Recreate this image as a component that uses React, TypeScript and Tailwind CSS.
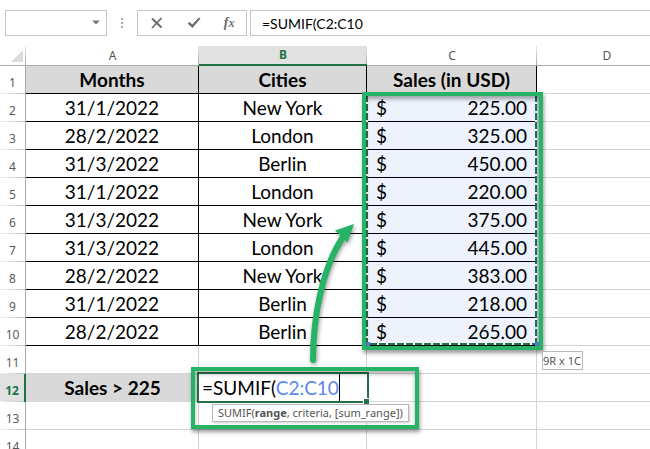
import { clsx } from "clsx";

type Row = { n: number; date?: string; city?: string; sales?: string };

const data: Row[] = [
  { n: 2, date: "31/1/2022", city: "New York", sales: "225.00" },
  { n: 3, date: "28/2/2022", city: "London", sales: "325.00" },
  { n: 4, date: "31/3/2022", city: "Berlin", sales: "450.00" },
  { n: 5, date: "31/1/2022", city: "London", sales: "220.00" },
  { n: 6, date: "31/3/2022", city: "New York", sales: "375.00" },
  { n: 7, date: "31/3/2022", city: "London", sales: "445.00" },
  { n: 8, date: "28/2/2022", city: "New York", sales: "383.00" },
  { n: 9, date: "31/1/2022", city: "Berlin", sales: "218.00" },
  { n: 10, date: "28/2/2022", city: "Berlin", sales: "265.00" },
];

const ui = "font-['Noto_Sans','Open_Sans',sans-serif]";
const filled = "border-b border-r border-black p-0 text-center";
const blank = "border-b border-r border-[#d4d4d4] p-0";

function FormulaBar() {
  return (
    <div className="flex h-[46px] items-start pl-[5px] pt-[10px]">
      <div className="relative h-[26px] w-[102px] shrink-0 border border-[#c6c6c6]">
        <select aria-label="Name box" className="h-full w-full appearance-none bg-transparent px-2 text-xs outline-none">
          <option></option>
        </select>
        <svg className="pointer-events-none absolute right-[6px] top-[9px]" width="8" height="5" viewBox="0 0 8 5">
          <path d="M0 0.5h8L4 4.5z" fill="#777" />
        </svg>
      </div>
      <svg className="mx-[13px] mt-[7px] shrink-0" width="4" height="12" viewBox="0 0 4 12" fill="#a6a6a6">
        <path d="M1 1h2v2H1zM1 5h2v2H1zM1 9h2v2H1z" />
      </svg>
      <div className="flex h-[26px] w-[110px] shrink-0 items-center justify-around border border-[#c6c6c6] text-[#6e6e6e]">
        <button aria-label="Cancel">
          <svg width="14" height="14" viewBox="0 0 14 14" fill="none" stroke="currentColor">
            <path d="M2 2.5 11.500 11.500" strokeWidth="2.200" />
            <path d="M11.500 2 2 12" strokeWidth="1.800" />
          </svg>
        </button>
        <button aria-label="Enter">
          <svg width="14" height="14" viewBox="0 0 14 14" fill="currentColor">
            <path d="M0.500 7.500 2.800 6l2.400 2.500L11.800 1.500l1.700 1L5.500 12z" />
          </svg>
        </button>
        <button aria-label="Insert function" className="flex items-baseline font-['Liberation_Serif',serif] text-sm font-bold italic leading-4">
          f<span className="text-xs">x</span>
        </button>
      </div>
      <input
        aria-label="Formula bar"
        defaultValue="=SUMIF(C2:C10"
        className="ml-[3px] h-[26px] min-w-0 flex-1 border border-r-0 border-[#c6c6c6] pl-[11px] font-[Lato,sans-serif] text-[14px] text-black outline-none"
      />
    </div>
  );
}

function ColumnHead({ label, active, last }: { label: string; active?: boolean; last?: boolean }) {
  return (
    <th
      scope="col"
      className={clsx(
        ui,
        "relative h-5 p-0 text-xs leading-[18px]",
        active ? "border-b-2 border-[#217346] bg-[#e1e1e1] font-bold text-[#217346]" : "border-b border-[#ababab] font-normal text-[#555]",
      )}
    >
      {label}
      {!last && <span className="absolute right-0 top-0 h-full w-px bg-linear-to-b from-[#e8e8e8] to-[#ababab]" />}
    </th>
  );
}

function RowHead({ n, active }: { n: number; active?: boolean }) {
  return (
    <th
      scope="row"
      className={clsx(
        ui,
        "relative h-7 p-0 pt-[6px] text-center text-xs leading-5",
        active ? "border-r-2 border-[#217346] bg-[#e1e1e1] font-bold text-[#217346]" : "border-r border-[#ababab] font-normal text-[#5a5a5a]",
      )}
    >
      {n}
      <span className="absolute bottom-0 left-0 h-px w-full bg-linear-to-r from-[#f2f2f2] to-[#c0c0c0]" />
    </th>
  );
}

function Sheet() {
  return (
    <table className="w-full min-w-[677px] table-fixed border-separate border-spacing-0 font-[Lato,sans-serif] text-[19px] leading-6 text-black">
      <colgroup>
        <col className="w-[26px]" />
        <col className="w-[173px]" />
        <col className="w-[168px]" />
        <col className="w-[170px]" />
        <col />
      </colgroup>
      <thead>
        <tr>
          <td className="relative h-5 border-b border-[#ababab] p-0">
            <svg className="absolute bottom-[3px] right-[3px]" width="12" height="12" viewBox="0 0 12 12">
              <path d="M12 0v12H0z" fill="#dcdcdc" />
            </svg>
            <span className="absolute right-0 top-0 h-full w-px bg-linear-to-b from-[#e8e8e8] to-[#ababab]" />
          </td>
          <ColumnHead label="A" />
          <ColumnHead label="B" active />
          <ColumnHead label="C" />
          <ColumnHead label="D" last />
        </tr>
      </thead>
      <tbody>
        <tr>
          <RowHead n={1} />
          {["Months", "Cities", "Sales (in USD)"].map((h) => (
            <td key={h} className={clsx(filled, "bg-[#d9d9d9] font-bold")}>
              {h}
            </td>
          ))}
          <td className={blank} />
        </tr>
        {data.map((r) => (
          <tr key={r.n}>
            <RowHead n={r.n} />
            <td className={filled}>{r.date}</td>
            <td className={filled}>{r.city}</td>
            <td className={clsx(filled, "bg-[#edf2fd]")}>
              <div className="flex justify-between pl-[9px] pr-[9px]">
                <span>$</span>
                <span>{r.sales}</span>
              </div>
            </td>
            <td className={blank} />
          </tr>
        ))}
        <tr>
          <RowHead n={11} />
          <td className={blank} />
          <td className={blank} />
          <td className={blank} />
          <td className={blank} />
        </tr>
        <tr>
          <RowHead n={12} active />
          <td className="bg-[#d9d9d9] p-0 text-center font-bold">Sales &gt; 225</td>
          <td className="relative p-0">
            <div className="absolute -inset-x-[2px] -bottom-px -top-[2px] z-10 flex items-center border-2 border-[#217346] bg-white pl-[3px]">
              <div role="textbox" aria-label="B12" contentEditable suppressContentEditableWarning className="whitespace-nowrap outline-none">
                =SUMIF(<span className="text-[#5b87ee]">C2:C10</span>
              </div>
              <span className="h-full w-px bg-black" />
              <span className="absolute -bottom-[3px] -right-[2px] size-[6px] border-l border-t border-white bg-[#217346]" />
            </div>
          </td>
          <td className={blank} />
          <td className={blank} />
        </tr>
        {[13, 14].map((n) => (
          <tr key={n}>
            <RowHead n={n} />
            <td className={blank} />
            <td className={blank} />
            <td className={blank} />
            <td className={blank} />
          </tr>
        ))}
      </tbody>
    </table>
  );
}

function Annotations() {
  return (
    <div className="pointer-events-none absolute inset-0 z-20">
      <svg className="absolute left-[362px] top-[44px]" width="182" height="258" viewBox="0 0 182 258" fill="none">
        <path d="M5 4V255M174 4V255M4 254H176" stroke="#fff" strokeWidth="2" />
        <path d="M5 5V253M174 5V253M8 254H174" stroke="#217346" strokeWidth="2" strokeDasharray="7 2" />
        <path d="M176 4V254" stroke="#7b96d8" />
        <path d="M4 252h4v4H4zM173 252h4v4h-4z" fill="#5b80dd" />
      </svg>
      <div className="absolute left-[362px] top-[46px] h-[258px] w-[181px] border-4 border-[#27b366] shadow-[1px_3px_4px_rgba(0,0,0,0.4),inset_0_3px_4px_rgba(0,0,0,0.35)]" />
      <div className={clsx(ui, "absolute left-[542px] top-[305px] h-[19px] whitespace-nowrap border border-[#b8b8b8] bg-white pr-px text-[11px] leading-[17px] text-[#555]")}>
        9R x 1C
      </div>
      <div className={clsx(ui, "absolute left-[212px] top-[358px] h-[18px] whitespace-nowrap border border-[#b8b8b8] bg-white px-[5px] text-[11px] leading-4 text-[#555] shadow-[1px_1px_2px_rgba(0,0,0,0.2)]")}>
        SUMIF(<b>range</b>, criteria, [sum_range])
      </div>
      <div className="absolute left-[191px] top-[321px] h-[62px] w-[228px] border-4 border-[#27b366] shadow-[1px_3px_4px_rgba(0,0,0,0.4),inset_0_3px_4px_rgba(0,0,0,0.3)]" />
      <svg className="absolute left-[300px] top-[170px] drop-shadow-[1px_2px_2px_rgba(0,0,0,0.4)]" width="64" height="150" viewBox="300 216 64 150">
        <path d="M313 360C313 318 322 268 343 237" fill="none" stroke="#27b366" strokeWidth="6" strokeLinecap="round" />
        <path d="M354 224 335 230.500 347.500 242.500z" fill="#27b366" />
      </svg>
    </div>
  );
}

export default function App() {
  return (
    <main className="h-screen overflow-hidden bg-white">
      <FormulaBar />
      <div className="relative">
        <Sheet />
        <Annotations />
      </div>
    </main>
  );
}
